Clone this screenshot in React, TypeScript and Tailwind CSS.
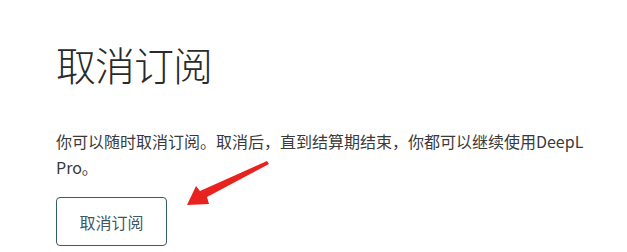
export default function App() {
  return (
    <div className="relative h-[252px] w-[627px] overflow-hidden bg-white pl-[56px] pt-[44px] font-['Noto_Sans_CJK_SC','Noto_Sans',sans-serif] text-[#222]">
      <h1 className="text-[40px] font-light leading-[40px] tracking-[-1px] text-[#2a2a2a]">取消订阅</h1>
      <p className="mt-[44px] w-[530px] text-[16px] leading-[26px] text-[#3a3a3a]">
        你可以随时取消订阅。取消后，直到结算期结束，你都可以继续使用DeepL Pro。
      </p>
      <button
        type="button"
        className="mt-[17px] flex h-[49px] w-[111px] items-center justify-center rounded-[4px] border border-[#2f5f68] text-[16px] text-[#3b5866]"
      >
        取消订阅
      </button>
      {/* red annotation arrow */}
      <svg className="absolute left-0 top-0" width="627" height="252" viewBox="0 0 627 252">
        <polygon
          points="267,161 269,164 207,197 209,204 187,205 196,186 200,191"
          fill="#e8231f"
        />
      </svg>
    </div>
  );
}
